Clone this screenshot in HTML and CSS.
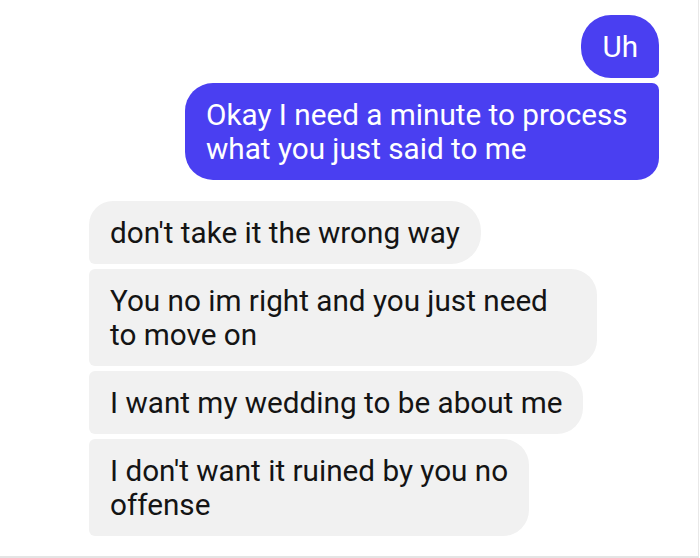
FILE: index.html
```html
<!DOCTYPE html>
<html lang="en">
<head>
<meta charset="utf-8">
<title>Chat</title>
<link rel="stylesheet" href="styles.css">
</head>
<body>
<div class="frame">
  <div class="chat">
    <div class="group group-out">
      <div class="msg out first">Uh</div>
      <div class="msg out last w-474">Okay I need a minute to process what you just said to me</div>
    </div>
    <div class="group group-in">
      <div class="msg in first">don't take it the wrong way</div>
      <div class="msg in mid w-508">You no im right and you just need to move on</div>
      <div class="msg in mid">I want my wedding to be about me</div>
      <div class="msg in last w-440">I don't want it ruined by you no offense</div>
    </div>
  </div>
</div>
</body>
</html>
```
FILE: styles.css
```css
html, body {
  margin: 0;
  padding: 0;
  background: #ffffff;
}
.frame {
  width: 698px;
  height: 556px;
  border-right: 1px solid #e8e8e8;
  border-bottom: 2px solid #e4e4e4;
  overflow: hidden;
}
.chat {
  display: flex;
  flex-direction: column;
  gap: 21px;
  padding: 15px 39px 0 89px;
}
.group {
  display: flex;
  flex-direction: column;
  gap: 5px;
}
.group-out { align-items: flex-end; }
.group-in { align-items: flex-start; }
.msg {
  box-sizing: border-box;
  max-width: 516px;
  font-family: Roboto, "Noto Sans", sans-serif;
  font-size: 29.7px;
  line-height: 34px;
  padding: 14.5px 21px 14.5px 21px;
  border-radius: 30px;
}
.w-474 { width: 474px; }
.w-508 { width: 508px; }
.w-440 { width: 440px; padding-right: 10px; }
.out {
  background: #4a3ff1;
  color: #ffffff;
}
.out.first { border-radius: 30px 30px 7px 30px; }
.out.last { border-radius: 28px 7px 22px 28px; }
.in {
  background: #f1f1f1;
  color: #141414;
}
.in.first { border-radius: 24px 30px 30px 6px; }
.in.mid { border-radius: 6px 26px 26px 6px; }
.in.last { border-radius: 6px 26px 26px 6px; }
```
